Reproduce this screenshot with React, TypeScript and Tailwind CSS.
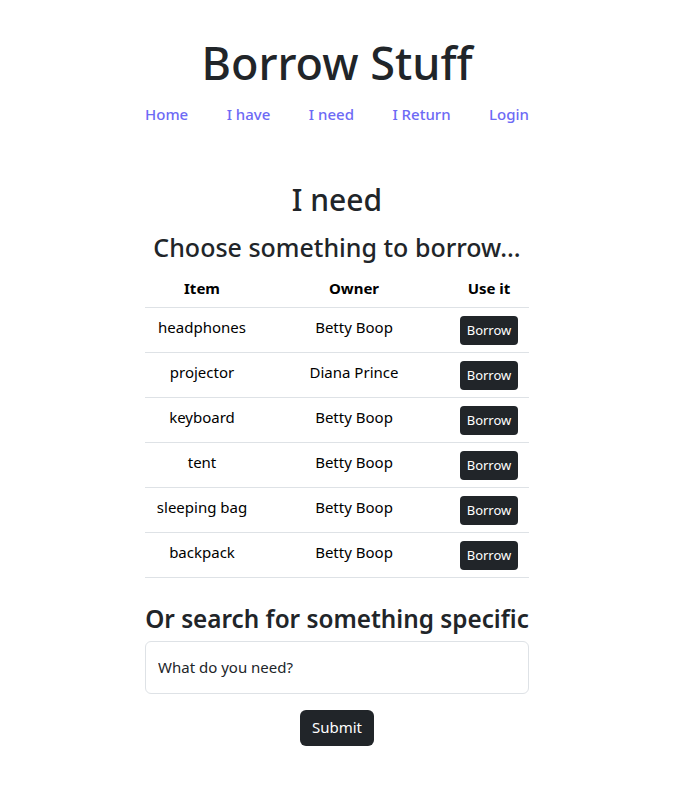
import React from 'react';

interface Listing {
  item: string;
  owner: string;
}

const listings: Listing[] = [
  { item: 'headphones', owner: 'Betty Boop' },
  { item: 'projector', owner: 'Diana Prince' },
  { item: 'keyboard', owner: 'Betty Boop' },
  { item: 'tent', owner: 'Betty Boop' },
  { item: 'sleeping bag', owner: 'Betty Boop' },
  { item: 'backpack', owner: 'Betty Boop' },
];

const links = ['Home', 'I have', 'I need', 'I Return', 'Login'];

export default function App() {
  return (
    <div className="min-h-screen bg-white font-['Noto_Sans',sans-serif] text-[#212529]">
      <div className="ml-[145px] flex w-[384px] flex-col items-center pt-[30px]">
        <h1 className="text-[45px] font-medium leading-[66px]">Borrow Stuff</h1>
        <nav className="mt-[6px] flex w-full justify-between text-[15px] font-medium leading-[24px] text-[#6d6af5]">
          {links.map((l) => (
            <a key={l} href="#" className="hover:underline">
              {l}
            </a>
          ))}
        </nav>

        <h2 className="mt-[55px] text-[30px] font-medium leading-[38px]">I need</h2>
        <h3 className="mt-[12px] text-[25px] font-medium leading-[32px]">Choose something to borrow...</h3>

        <table className="mt-[6px] w-full text-center text-[15px] text-black">
          <thead>
            <tr className="border-b border-[#dee2e6]">
              <th className="w-[114px] pb-[7px] pt-[8px] font-bold">Item</th>
              <th className="pb-[7px] pt-[8px] font-bold">Owner</th>
              <th className="w-[80px] pb-[7px] pt-[8px] font-bold">Use it</th>
            </tr>
          </thead>
          <tbody>
            {listings.map(({ item, owner }) => (
              <tr key={item} className="h-[45px] border-b border-[#dee2e6]">
                <td className="align-top pt-[8px]">{item}</td>
                <td className="align-top pt-[8px]">{owner}</td>
                <td className="align-top pt-[8px]">
                  <button className="h-[29px] rounded-[4px] bg-[#212529] px-[7px] pt-[1px] text-[13px] text-white">
                    Borrow
                  </button>
                </td>
              </tr>
            ))}
          </tbody>
        </table>

        <h3 className="mt-[25px] whitespace-nowrap text-center text-[24.3px] font-semibold leading-[32px]">
          Or search for something specific
        </h3>
        <input
          type="text"
          placeholder="What do you need?"
          className="mt-[6px] h-[53px] w-full rounded-[6px] border border-[#dee2e6] px-[12px] text-[15px] placeholder:text-[#212529] focus:outline-none"
        />
        <button className="mt-[16px] h-[36px] rounded-[6px] bg-[#212529] px-[12px] text-[15px] text-white">
          Submit
        </button>
      </div>
    </div>
  );
}
